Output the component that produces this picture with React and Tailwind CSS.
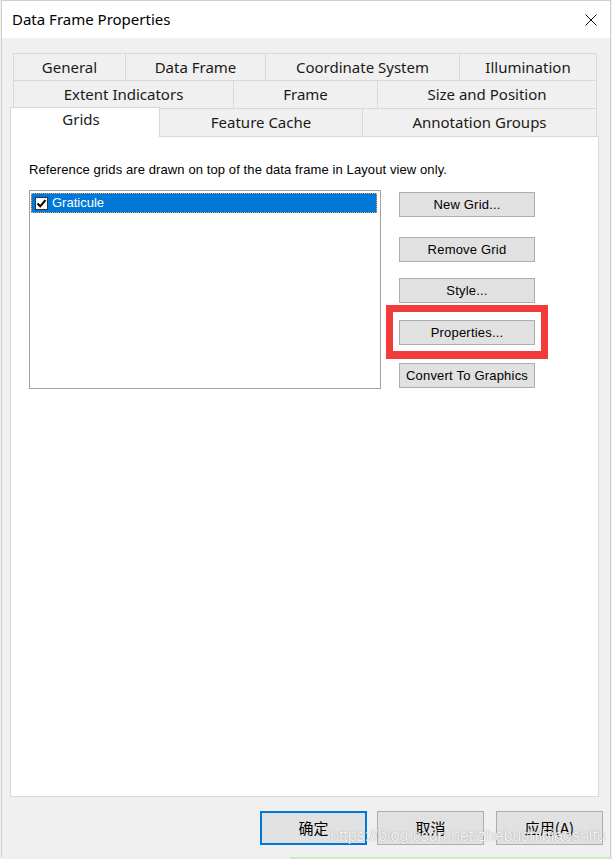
export default function App() {
  const tabBase =
    "flex items-center justify-center border-t border-l border-[#d9d9d9] text-[15px] text-[#1a1a1a] font-['Noto_Sans','Open_Sans',sans-serif]";
  const btn =
    "w-[136px] h-[25px] flex items-center justify-center bg-[#e1e1e1] border border-[#adadad] text-[13px] tracking-[0.2px] text-black font-['Liberation_Sans',Arial,sans-serif]";
  const foot =
    "w-[107px] h-[34px] flex items-center justify-center bg-[#e1e1e1] text-[15px] text-black font-['Noto_Sans_CJK_SC','Noto_Sans',sans-serif]";

  return (
    <div className="relative w-[612px] h-[859px] overflow-hidden bg-[#f0f0f0]">
      <div className="ml-[1px] w-[610px] h-[857px] flex flex-col border-x border-t border-[#cfcfcf] bg-[#f0f0f0]">
        {/* Title bar */}
        <div className="h-[37px] bg-white flex items-center justify-between pl-[10px] pr-[13px]">
          <span className="text-[15px] text-black font-['Noto_Sans','Open_Sans',sans-serif]">
            Data Frame Properties
          </span>
          <svg width="12" height="12" viewBox="0 0 12 12" className="block">
            <path d="M0.5 0.5 L11.5 11.5 M11.5 0.5 L0.5 11.5" stroke="#111" strokeWidth="1" fill="none" />
          </svg>
        </div>

        {/* Body */}
        <div className="flex-1 flex flex-col pl-[8px] pt-[15px]">
          {/* Tabs */}
          <div className="w-[589px]">
            <div className="flex ml-[3px] h-[27px]">
              <div className={`${tabBase} w-[112px]`}>General</div>
              <div className={`${tabBase} w-[140px]`}>Data Frame</div>
              <div className={`${tabBase} w-[194px]`}>Coordinate System</div>
              <div className={`${tabBase} w-[138px] border-r`}>Illumination</div>
            </div>
            <div className="flex ml-[3px] h-[28px]">
              <div className={`${tabBase} w-[220px]`}>Extent Indicators</div>
              <div className={`${tabBase} w-[144px]`}>Frame</div>
              <div className={`${tabBase} w-[220px] border-r`}>Size and Position</div>
            </div>
            <div className="flex items-end h-[28px]">
              <div className={`${tabBase} relative z-10 w-[150px] h-[30px] -mb-px bg-white border-r pb-[6px] pr-[8px]`}>
                Grids
              </div>
              <div className={`${tabBase} w-[202px] h-[28px] border-l-0`}>Feature Cache</div>
              <div className={`${tabBase} w-[235px] h-[28px] border-r`}>Annotation Groups</div>
            </div>
          </div>

          {/* Panel */}
          <div className="w-[589px] h-[661px] bg-white border border-[#d9d9d9] pl-[18px] pt-[25px] font-['Liberation_Sans',Arial,sans-serif]">
            <div className="text-[13px] leading-[15px] tracking-[0.1px] text-black">
              Reference grids are drawn on top of the data frame in Layout view only.
            </div>
            <div className="flex mt-[13px]">
              <div className="w-[352px] h-[199px] border border-[#a0a0a0] bg-white pl-[1px] pt-[2px]">
                <div className="w-[346px] h-[20px] bg-[#0078d7] border border-dotted border-[#e9a15a] flex items-center pl-[3px]">
                  <div className="w-[13px] h-[13px] bg-white border border-[#333] flex items-center justify-center">
                    <svg width="11" height="11" viewBox="0 0 11 11">
                      <path d="M1.5 5.5 L4.2 8.3 L9.5 2.2" stroke="#000" strokeWidth="2" fill="none" />
                    </svg>
                  </div>
                  <span className="ml-[4px] text-[13px] text-white">Graticule</span>
                </div>
              </div>
              <div className="ml-[18px] mt-[2px] flex flex-col">
                <div className={btn}>New Grid...</div>
                <div className={`${btn} mt-[20px]`}>Remove Grid</div>
                <div className={`${btn} mt-[16px]`}>Style...</div>
                <div className="relative mt-[17px]">
                  <div className={btn}>Properties...</div>
                  <div className="absolute -left-[13px] -top-[15px] w-[162px] h-[54px] border-[7px] border-b-[8px] border-[#f23b3b]" />
                </div>
                <div className={`${btn} mt-[18px]`}>Convert To Graphics</div>
              </div>
            </div>
          </div>

          {/* Footer buttons */}
          <div className="flex justify-end pr-[7px] mt-[14px]">
            <div className={`${foot} border-2 border-[#0078d7]`}>确定</div>
            <div className={`${foot} ml-[10px] border border-[#adadad]`}>取消</div>
            <div className={`${foot} ml-[12px] border border-[#adadad]`}>应用(A)</div>
          </div>
        </div>
      </div>

      {/* bottom edge strip */}
      <div className="flex h-[2px]">
        <div className="w-[290px] bg-[#f0f0f0]" />
        <div className="flex-1 bg-[#c9ecc0]" />
      </div>

      {/* watermark */}
      <div className="absolute left-[330px] top-[826px] text-[16px] leading-[20px] text-white/90 font-['Liberation_Sans',Arial,sans-serif] [text-shadow:0_0_1px_rgba(0,0,0,0.45)]">
        https://blog.csdn.net/zhebushibiaoshifu
      </div>
    </div>
  );
}
